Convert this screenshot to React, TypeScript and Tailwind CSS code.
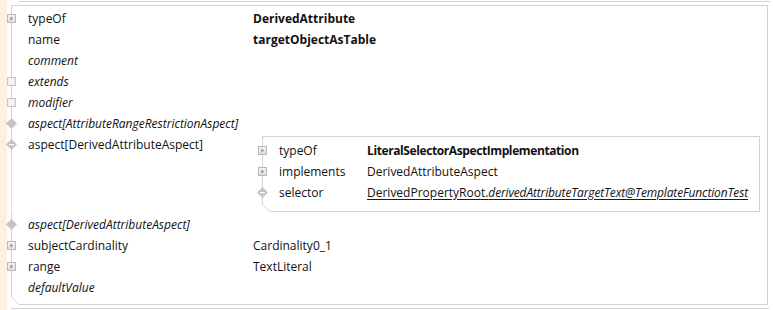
import React from "react"

type Icon = "collapsed" | "empty" | "diamond" | "diamondOpen" | "none"

function NodeIcon({ kind }: { kind: Icon }) {
  return (
    <div className="-ml-[5px] flex h-[11px] w-[9px] shrink-0 items-center justify-center">
      {kind === "collapsed" && (
        <svg width="9" height="9" viewBox="0 0 9 9">
          <defs>
            <linearGradient id="sq" x1="0" y1="0" x2="0" y2="1">
              <stop offset="0" stopColor="#f6f6f6" />
              <stop offset="1" stopColor="#dcdcdc" />
            </linearGradient>
          </defs>
          <rect x="0.5" y="0.5" width="8" height="8" fill="url(#sq)" stroke="#b9b9b9" />
          <path d="M3.5 2.5 L6 4.5 L3.5 6.5 Z" fill="#8c8c8c" />
        </svg>
      )}
      {kind === "empty" && (
        <svg width="9" height="9" viewBox="0 0 9 9">
          <rect x="0.5" y="0.5" width="8" height="8" fill="#f3f3f3" stroke="#c6c6c6" />
        </svg>
      )}
      {(kind === "diamond" || kind === "diamondOpen") && (
        <svg width="11" height="11" viewBox="0 0 11 11" className="shrink-0">
          <polygon points="5.5,0 11,5.5 5.5,11 0,5.5" fill="#c4c4c4" />
          {kind === "diamondOpen" && <rect x="3" y="5" width="5" height="1.2" fill="#ffffff" />}
        </svg>
      )}
    </div>
  )
}

function Row({
  icon,
  label,
  italic,
  value,
  bold,
  labelWidth,
  tight,
}: {
  icon: Icon
  label: string
  italic?: boolean
  value?: React.ReactNode
  bold?: boolean
  labelWidth: string
  tight?: boolean
}) {
  return (
    <div className="flex h-[21px] items-center border-l border-[#d2d2d2]">
      <NodeIcon kind={icon} />
      <div className={`ml-[12px] shrink-0 ${labelWidth} ${italic ? "italic" : ""}`}>{label}</div>
      {value && (
        <div className={`${bold ? "font-bold" : ""} ${tight ? "tracking-[-0.4px]" : ""}`}>{value}</div>
      )}
    </div>
  )
}

function Chamfer() {
  return (
    <svg width="8" height="8" viewBox="0 0 8 8" className="absolute -bottom-[1px] left-0 bg-white">
      <line x1="0.5" y1="0" x2="8" y2="7.5" stroke="#d2d2d2" strokeWidth="1" />
    </svg>
  )
}

export default function App() {
  return (
    <div
      className="flex h-[310px] w-[773px] overflow-hidden bg-white text-[12px] text-[#111]"
      style={{ fontFamily: '"Segoe UI", "Open Sans", sans-serif' }}
    >
      {/* editor margin */}
      <div className="w-[7px] shrink-0 bg-[#fdf0de]" />

      <div className="flex-1">
        <div className="ml-[12px] mr-[3px] h-[2px] border-b border-[#d2d2d2]" />

        {/* concept node */}
        <div className="relative ml-[4px] mt-[3px] h-[300px] w-[757px] border-t border-r border-b border-[#d2d2d2]">
          <div className="h-[2px] border-l border-[#d2d2d2]" />
          <Row icon="collapsed" label="typeOf" value="DerivedAttribute" bold labelWidth="w-[225px]" />
          <Row icon="none" label="name" value="targetObjectAsTable" bold labelWidth="w-[225px]" />
          <Row icon="none" label="comment" italic labelWidth="w-[225px]" />
          <Row icon="empty" label="extends" italic labelWidth="w-[225px]" />
          <Row icon="empty" label="modifier" italic labelWidth="w-[225px]" />
          <Row icon="diamond" label="aspect[AttributeRangeRestrictionAspect]" italic labelWidth="w-[225px]" />

          {/* expanded aspect */}
          <div className="flex h-[80px]">
            <div className="flex flex-col">
              <div className="flex h-[21px] items-center border-l border-[#d2d2d2]">
                <NodeIcon kind="diamondOpen" />
                <div className="ml-[12px] w-[225px]">aspect[DerivedAttributeAspect]</div>
              </div>
              <div className="flex-1 border-l border-dotted border-[#c8c8c8]" />
            </div>

            <div className="relative ml-[9px] mt-[2px] h-[76px] w-[498px] border-t border-r border-b border-[#d2d2d2]">
              <div className="h-[3px] border-l border-[#d2d2d2]" />
              <Row
                icon="collapsed"
                label="typeOf"
                value="LiteralSelectorAspectImplementation"
                bold
                tight
                labelWidth="w-[88px]"
              />
              <Row icon="collapsed" label="implements" value="DerivedAttributeAspect" labelWidth="w-[88px]" />
              <Row
                icon="diamondOpen"
                label="selector"
                labelWidth="w-[88px]"
                value={
                  <span className="underline decoration-[#0000ff] underline-offset-[2px]">
                    DerivedPropertyRoot.
                    <span className="italic tracking-[-0.15px]">derivedAttributeTargetText@TemplateFunctionTest</span>
                  </span>
                }
              />
              <div className="h-[7px] border-l border-[#d2d2d2]" />
              <Chamfer />
            </div>
          </div>

          <Row icon="diamond" label="aspect[DerivedAttributeAspect]" italic labelWidth="w-[225px]" />
          <Row icon="collapsed" label="subjectCardinality" value="Cardinality0_1" labelWidth="w-[225px]" />
          <Row icon="collapsed" label="range" value="TextLiteral" labelWidth="w-[225px]" />
          <Row icon="none" label="defaultValue" italic labelWidth="w-[225px]" />
          <Chamfer />
        </div>

        <div className="ml-[4px] mr-[4px] mt-[3px] border-t border-[#d2d2d2]" />
      </div>
    </div>
  )
}
